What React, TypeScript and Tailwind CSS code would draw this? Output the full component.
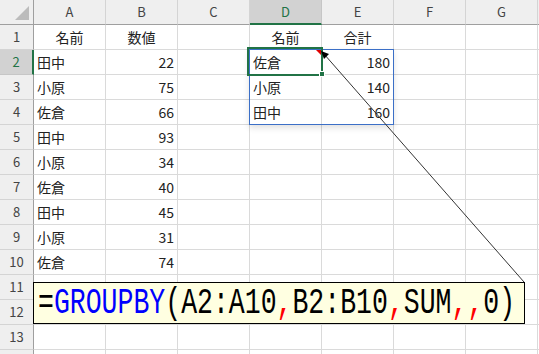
import React from 'react';

const COLS = ['A', 'B', 'C', 'D', 'E', 'F', 'G', ''];

type Cell = { text: string; align: 'left' | 'right' | 'center' };

const cells: Record<string, Cell> = {
  A1: { text: '名前', align: 'center' },
  B1: { text: '数値', align: 'center' },
  D1: { text: '名前', align: 'center' },
  E1: { text: '合計', align: 'center' },
  D2: { text: '佐倉', align: 'left' },
  E2: { text: '180', align: 'right' },
  D3: { text: '小原', align: 'left' },
  E3: { text: '140', align: 'right' },
  D4: { text: '田中', align: 'left' },
  E4: { text: '160', align: 'right' },
};

const source: [string, string][] = [
  ['田中', '22'],
  ['小原', '75'],
  ['佐倉', '66'],
  ['田中', '93'],
  ['小原', '34'],
  ['佐倉', '40'],
  ['田中', '45'],
  ['小原', '31'],
  ['佐倉', '74'],
];

source.forEach(([name, value], i) => {
  cells[`A${i + 2}`] = { text: name, align: 'left' };
  cells[`B${i + 2}`] = { text: value, align: 'right' };
});

const alignClass = {
  left: 'justify-start pl-[3px]',
  right: 'justify-end pr-[3px]',
  center: 'justify-center',
};

export default function App() {
  const rows = Array.from({ length: 14 }, (_, i) => i + 1);

  return (
    <div
      className="relative w-[539px] h-[354px] overflow-hidden bg-white text-[#222]"
      style={{ fontFamily: '"Noto Sans CJK JP", "Noto Sans", sans-serif' }}
    >
      <div className="grid grid-cols-[34px_repeat(8,72px)] grid-rows-[25px_repeat(14,25px)]">
        {/* corner */}
        <div className="relative bg-[#efefef] border-r border-b border-[#9f9f9f]">
          <div className="absolute right-[4px] bottom-[4px] w-0 h-0 border-l-[14px] border-l-transparent border-b-[14px] border-b-[#bcbcbc]" />
        </div>
        {COLS.map((c, i) => (
          <div
            key={i}
            className={`flex items-center justify-center text-[13px] border-b border-r ${
              c === 'D'
                ? 'bg-[#d2d2d2] text-[#217346] border-b-2 border-b-[#217346] border-r-[#c6c6c6]'
                : 'bg-[#efefef] text-[#444] border-b-[#9f9f9f] border-r-[#d4d4d4]'
            }`}
          >
            {c}
          </div>
        ))}

        {rows.map((r) => (
          <React.Fragment key={r}>
            <div
              className={`flex items-center justify-center text-[13px] border-b ${
                r === 2
                  ? 'bg-[#d2d2d2] text-[#217346] border-r-2 border-r-[#217346] border-b-[#c6c6c6]'
                  : 'bg-[#efefef] text-[#444] border-r border-r-[#9f9f9f] border-b-[#d4d4d4]'
              }`}
            >
              {r < 14 ? r : ''}
            </div>
            {COLS.map((c, i) => {
              const cell = cells[`${c}${r}`];
              return (
                <div
                  key={i}
                  className={`flex items-center text-[14px] border-r border-b border-[#dadada] ${
                    cell ? alignClass[cell.align] : ''
                  }`}
                >
                  {cell?.text}
                </div>
              );
            })}
          </React.Fragment>
        ))}
      </div>

      {/* spill range */}
      <div className="absolute left-[249px] top-[49px] w-[145px] h-[76px] border border-[#3b6fc7] shadow-[0_3px_6px_rgba(0,0,0,0.12)] pointer-events-none" />

      {/* active cell */}
      <div className="absolute left-[247px] top-[47px] w-[76px] h-[29px] border-2 border-[#217346] pointer-events-none" />
      <div className="absolute left-[319px] top-[71px] w-[6px] h-[6px] bg-[#217346] border border-white" />
      <div className="absolute left-[316px] top-[50px] w-0 h-0 border-l-[5px] border-l-transparent border-t-[5px] border-t-[#e00000]" />

      {/* callout */}
      <svg className="absolute inset-0 pointer-events-none" width="539" height="354">
        <line x1="524" y1="282" x2="324" y2="54" stroke="#333" strokeWidth="1" />
        <polygon points="321,51 329,54 324,59" fill="#000" />
      </svg>

      <div className="absolute left-[33px] top-[282px] w-[492px] h-[42px] bg-[#ffffe1] border border-black flex items-center pl-[4px]">
        <div
          className="text-[26.5px] leading-none scale-y-[1.4] whitespace-pre text-black"
          style={{ fontFamily: '"Liberation Mono", monospace' }}
        >
          =<span className="text-[#0000ff]">GROUPBY</span>(A2:A10
          <span className="text-[#ff0000]">,</span>B2:B10
          <span className="text-[#ff0000]">,</span>SUM
          <span className="text-[#ff0000]">,,</span>0)
        </div>
      </div>
    </div>
  );
}
